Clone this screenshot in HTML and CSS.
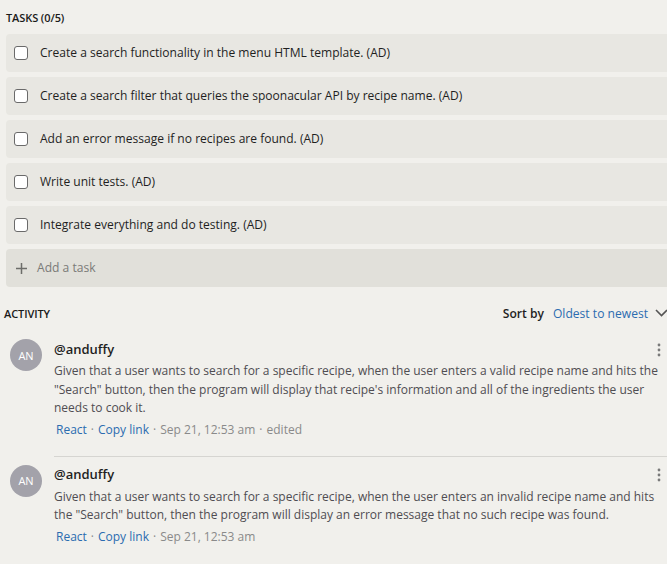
FILE: index.html
```html
<!DOCTYPE html>
<html>
<head>
<meta charset="utf-8">
<link rel="stylesheet" href="styles.css">
</head>
<body>
<div class="page">
  <section class="tasks">
    <h2 class="section-title tasks-title">TASKS (0/5)</h2>
    <ul class="task-list">
      <li class="task"><span class="check"></span><span class="task-text">Create a search functionality in the menu HTML template. (AD)</span></li>
      <li class="task"><span class="check"></span><span class="task-text">Create a search filter that queries the spoonacular API by recipe name. (AD)</span></li>
      <li class="task"><span class="check"></span><span class="task-text">Add an error message if no recipes are found. (AD)</span></li>
      <li class="task"><span class="check"></span><span class="task-text">Write unit tests. (AD)</span></li>
      <li class="task"><span class="check"></span><span class="task-text">Integrate everything and do testing. (AD)</span></li>
      <li class="task add-task">
        <svg class="plus" width="13" height="13" viewBox="0 0 13 13"><path d="M6.5 1v11M1 6.5h11" stroke="#6d6d6a" stroke-width="1.5" fill="none"/></svg>
        <span class="add-text">Add a task</span>
      </li>
    </ul>
  </section>

  <section class="activity">
    <div class="activity-head">
      <h2 class="section-title">ACTIVITY</h2>
      <div class="sort">
        <span class="sort-label">Sort by</span>
        <span class="sort-value">Oldest to newest</span>
        <svg class="chevron" width="13" height="8" viewBox="0 0 13 8"><path d="M1 1l5.5 5.5L12 1" stroke="#555" stroke-width="1.6" fill="none"/></svg>
      </div>
    </div>

    <div class="comment">
      <div class="avatar">AN</div>
      <div class="comment-body">
        <div class="comment-head">
          <span class="user">@anduffy</span>
          <svg class="kebab" width="4" height="14" viewBox="0 0 4 14"><circle cx="2" cy="2" r="1.4" fill="#7a7a7a"/><circle cx="2" cy="7" r="1.4" fill="#7a7a7a"/><circle cx="2" cy="12" r="1.4" fill="#7a7a7a"/></svg>
        </div>
        <p class="comment-text">Given that a user wants to search for a specific recipe, when the user enters a valid recipe name and hits the "Search" button, then the program will display that recipe's information and all of the ingredients the user needs to cook it.</p>
        <div class="actions"><span class="link">React</span><span class="dot">·</span><span class="link">Copy link</span><span class="dot">·</span><span class="meta">Sep 21, 12:53 am</span><span class="dot">·</span><span class="meta">edited</span></div>
      </div>
    </div>

    <div class="comment second">
      <div class="avatar">AN</div>
      <div class="comment-body">
        <div class="comment-head">
          <span class="user">@anduffy</span>
          <svg class="kebab" width="4" height="14" viewBox="0 0 4 14"><circle cx="2" cy="2" r="1.4" fill="#7a7a7a"/><circle cx="2" cy="7" r="1.4" fill="#7a7a7a"/><circle cx="2" cy="12" r="1.4" fill="#7a7a7a"/></svg>
        </div>
        <p class="comment-text">Given that a user wants to search for a specific recipe, when the user enters an invalid recipe name and hits the "Search" button, then the program will display an error message that no such recipe was found.</p>
        <div class="actions"><span class="link">React</span><span class="dot">·</span><span class="link">Copy link</span><span class="dot">·</span><span class="meta">Sep 21, 12:53 am</span></div>
      </div>
    </div>
  </section>
</div>
</body>
</html>
```

FILE: styles.css
```css
* { box-sizing: border-box; }
html, body {
  margin: 0;
  padding: 0;
  background: #f1f0ec;
  overflow: hidden;
}
body {
  font-family: "Open Sans", "Noto Sans", sans-serif;
  color: #1e1e1e;
}
.page {
  width: 667px;
  height: 564px;
  overflow: hidden;
}
.section-title {
  margin: 0;
  font-size: 11px;
  font-weight: 600;
  color: #1a1a1a;
  letter-spacing: -0.1px;
}
.tasks {
  padding: 10px 0 0 6px;
}
.tasks-title {
  line-height: 16px;
  margin-bottom: 8px;
}
.task-list {
  list-style: none;
  margin: 0 -10px 0 0;
  padding: 0;
  display: flex;
  flex-direction: column;
  gap: 5px;
}
.task {
  height: 38px;
  background: #e8e7e2;
  border-radius: 4px;
  display: flex;
  align-items: center;
  padding-left: 8px;
}
.check {
  width: 14px;
  height: 14px;
  border: 1px solid #6a6a6a;
  border-radius: 3px;
  background: #fff;
  flex: none;
}
.task-text {
  margin-left: 12px;
  font-size: 12.05px;
  color: #1f1f1f;
  margin-top: -1px;
}
.add-task {
  background: #e1e0da;
}
.plus { flex: none; margin-left: 1px; }
.add-text {
  margin-left: 9px;
  font-size: 12.1px;
  color: #7b7b78;
  margin-top: -1px;
}
.activity {
  padding: 18px 0 0 0;
}
.activity-head {
  display: flex;
  align-items: center;
  justify-content: space-between;
  padding-left: 4px;
  height: 16px;
}
.sort {
  display: flex;
  align-items: center;
  font-size: 12.1px;
}
.sort-label {
  font-weight: 600;
  color: #1f1f1f;
}
.sort-value {
  margin-left: 9px;
  color: #2b6cb0;
}
.chevron { margin-left: 7px; margin-right: -1px; }
.comment {
  display: flex;
  padding-left: 10px;
  margin-top: 19px;
}
.comment.second {
  margin-top: 17px;
}
.comment.second .comment-body {
  border-top: 1px solid #d6d5d1;
  padding-top: 9px;
}
.avatar {
  width: 32px;
  height: 32px;
  border-radius: 50%;
  background: #a3a2aa;
  color: #fff;
  font-size: 11px;
  font-weight: 500;
  display: flex;
  align-items: center;
  justify-content: center;
  flex: none;
  margin-top: -1px;
}
.comment.second .avatar { margin-top: 9px; }
.comment-body {
  margin-left: 12px;
  flex: 1;
  min-width: 0;
}
.comment-head {
  display: flex;
  justify-content: space-between;
  align-items: center;
  height: 17px;
  padding-right: 6px;
}
.user {
  font-size: 13px;
  font-weight: 600;
  color: #1f1f1f;
}
.kebab { margin-top: 2px; }
.comment-text {
  margin: 5px 0 0 0;
  font-size: 12px;
  line-height: 18.6px;
  color: #4f4d52;
  padding-right: 6px;
}
.actions {
  margin-top: 3px;
  font-size: 12px;
  line-height: 18px;
  padding-left: 2px;
}
.link { color: #2b6cb0; }
.dot { color: #8a8a8a; margin: 0 4px; }
.meta { color: #8a8a8a; }
```
